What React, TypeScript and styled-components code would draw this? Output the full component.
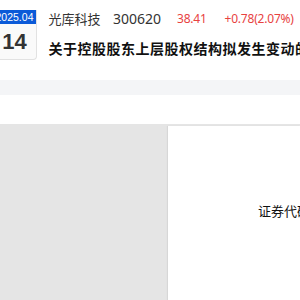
import styled, { createGlobalStyle } from "styled-components";

const GlobalStyle = createGlobalStyle`
    html, body {
        margin: 0;
        padding: 0;
        background: #ffffff;
        overflow: hidden;
    }
    body {
        font-family: "Noto Sans", "Noto Sans CJK SC", sans-serif;
    }
`;

const stock = {
    name: "光库科技",
    code: "300620",
    price: "38.41",
    change: "+0.78(2.07%)",
    title: "关于控股股东上层股权结构拟发生变动的提示性公告",
};

const App = () => {
    return (
        <Page>
            <GlobalStyle />
            <Header>
                <DateBadge>
                    <Month>2025.04</Month>
                    <Day>14</Day>
                </DateBadge>
                <Info>
                    <QuoteRow>
                        <Name>{stock.name}</Name>
                        <Code>{stock.code}</Code>
                        <Price>{stock.price}</Price>
                        <Change>{stock.change}</Change>
                    </QuoteRow>
                    <Title>{stock.title}</Title>
                </Info>
            </Header>
            <Divider />
            <Spacer />
            <Viewer>
                <Sidebar />
                <Document>
                    <DocLine>证券代码：300620　　证券简称：光库科技</DocLine>
                </Document>
            </Viewer>
        </Page>
    );
};

export default App;

const Page = styled.div`
    width: 300px;
    height: 300px;
    overflow: hidden;
    white-space: nowrap;
`;

const Header = styled.div`
    display: flex;
    align-items: flex-start;
    gap: 11.5px;
    height: 80px;
    padding-top: 10px;
    box-sizing: border-box;
`;

const DateBadge = styled.div`
    flex: none;
    box-sizing: border-box;
    width: 45px;
    margin-left: -8px;
    border: 1px solid #e2e2e2;
    border-top: none;
    border-radius: 0 0 4px 4px;
    background: #fafafa;
    overflow: hidden;
    text-align: center;
`;

const Month = styled.div`
    height: 14px;
    line-height: 14px;
    background: #0b5ad8;
    color: #ffffff;
    font-family: "Liberation Sans", sans-serif;
    font-size: 10.5px;
`;

const Day = styled.div`
    height: 35px;
    line-height: 35px;
    color: #333333;
    font-family: "Liberation Sans", sans-serif;
    font-weight: bold;
    font-size: 22px;
`;

const Info = styled.div`
    display: flex;
    flex-direction: column;
    gap: 12px;
`;

const QuoteRow = styled.div`
    display: flex;
    align-items: center;
    height: 16px;
`;

const Cell = styled.span<{ $w?: number; $red?: boolean }>`
    flex: none;
    width: ${p => (p.$w ? `${p.$w}px` : "auto")};
    color: ${p => (p.$red ? "#e8423f" : "#333333")};
    font-size: ${p => (p.$red ? "12px" : "14px")};
    letter-spacing: ${p => (p.$red ? "-0.2px" : "0")};
`;

const Name = styled(Cell).attrs({ $w: 64.5 })`
    font-family: "Noto Sans CJK SC", sans-serif;
    font-size: 13px;
`;

const Code = styled(Cell).attrs({ $w: 64 })``;

const Price = styled(Cell).attrs({ $w: 47.5, $red: true })``;

const Change = styled(Cell).attrs({ $red: true })``;

const Title = styled.div`
    color: #111111;
    font-family: "Noto Sans CJK SC", sans-serif;
    font-weight: bold;
    font-size: 14px;
    letter-spacing: 0.5px;
    line-height: 20px;
`;

const Divider = styled.div`
    height: 15px;
    background: #f4f5f7;
`;

const Spacer = styled.div`
    height: 29px;
`;

const Viewer = styled.div`
    display: flex;
    height: 176px;
    padding-top: 2px;
    background: #e5e5e5;
`;

const Sidebar = styled.div`
    width: 168px;
    flex: none;
`;

const Document = styled.div`
    flex: 1;
    background: #ffffff;
    box-shadow: -1px 0 1px rgba(0, 0, 0, 0.06);
    padding: 78px 0 0 90px;
    overflow: hidden;
`;

const DocLine = styled.div`
    color: #111111;
    font-family: "Liberation Serif", "Noto Sans CJK SC", serif;
    font-size: 13px;
    line-height: 16px;
`;
